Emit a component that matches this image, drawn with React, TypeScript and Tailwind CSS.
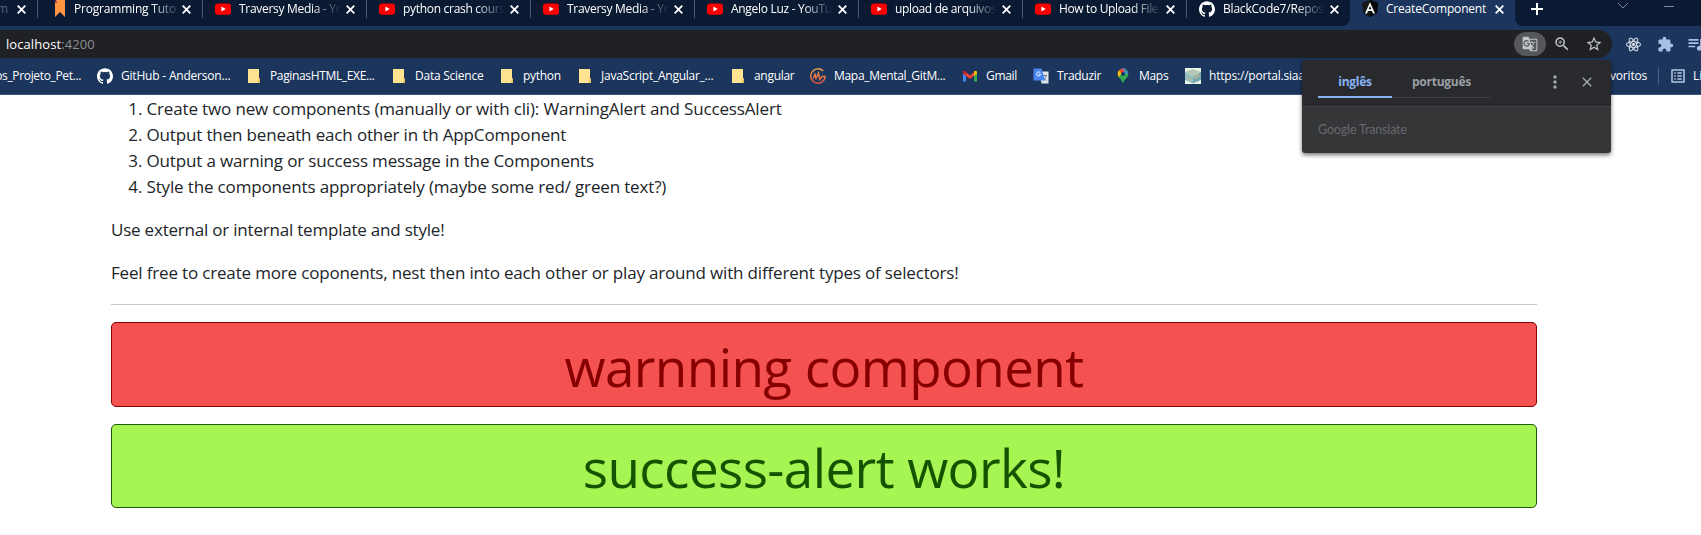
import React from "react";
import { SiGithub, SiReact } from "react-icons/si";
import { MdExtension, MdGTranslate, MdOutlineZoomIn, MdStarBorder, MdClose, MdMoreVert, MdQueueMusic, MdOutlineListAlt } from "react-icons/md";

function YouTubeIcon() {
  return (
    <svg width="16" height="16" viewBox="0 0 16 16">
      <rect x="0" y="2.4" width="16" height="11.4" rx="3" fill="#f00" />
      <path d="M6.4 5.6v5l4.3-2.5z" fill="#fff" />
    </svg>
  );
}
function RibbonIcon() {
  return (
    <svg width="16" height="18" viewBox="0 0 16 18">
      <path d="M1 0h10v17l-5-5-5 5z" fill="#ff9542" />
      <path d="M0 0h2l1 3-2 -1z" fill="#5b2a55" />
    </svg>
  );
}
function AngularIcon() {
  return (
    <svg width="16" height="18" viewBox="0 0 16 18">
      <path d="M8 0l8 2.8-1.2 10.4L8 17 1.2 13.2 0 2.8z" fill="#16181c" />
      <path d="M8 0l8 2.8-1.2 10.4L8 17z" fill="#050608" />
      <path d="M8 2.2L3 13.4h2l1-2.5h4l1 2.5h2zM8 6l1.4 3.3H6.6z" fill="#fff" />
    </svg>
  );
}
function FolderIcon() {
  return (
    <svg width="16" height="16" viewBox="0 0 16 16">
      <path d="M2 1h11v9.5h1V15H2z" fill="#ffe391" />
      <path d="M13 10.5h1V15h-2.5z" fill="#e9c25c" />
    </svg>
  );
}
function GitMindIcon() {
  return (
    <svg width="16" height="16" viewBox="0 0 16 16" fill="none" strokeWidth="1.4">
      <defs>
        <linearGradient id="gm" x1="0" y1="0" x2="0" y2="1">
          <stop offset="0" stopColor="#f0a04b" />
          <stop offset="1" stopColor="#e8553f" />
        </linearGradient>
      </defs>
      <path d="M13.2 3A7.2 7.2 0 1 0 15.2 8.5H12L9.8 11.5 8.5 5 6 10.5 5 6.5 3.2 10.5" stroke="url(#gm)" />
    </svg>
  );
}
function GmailIcon() {
  return (
    <svg width="16" height="16" viewBox="0 0 16 16">
      <path d="M1 4.5V13.5h3V6.5z" fill="#4285f4" />
      <path d="M12 6.5V13.5h3V4.5z" fill="#34a853" />
      <path d="M4 4.2l4 3 4-3v3.7l-4 3-4-3z" fill="#ea4335" />
      <path d="M1 4.2C1 2.5 2.8 2.2 4 3.2v4.6L1 5.7z" fill="#c5221f" />
      <path d="M15 4.2c0-1.7-1.8-2-3-1v4.6l3-2.1z" fill="#fbbc04" />
    </svg>
  );
}
function TranslateIcon() {
  return (
    <svg width="16" height="16" viewBox="0 0 16 16">
      <path d="M6 3.5h9.5v12H8.5z" fill="#dfe3ea" />
      <path d="M9 7.5h5M11.5 6.5v1M13 7.5c-.5 2.5-1.5 3.5-3 4.5M10 8.5c1 2 2 3 3.5 3.8" stroke="#6f8296" fill="none" />
      <path d="M0.5 0.5h8l3.5 12H.5z" fill="#4a86f0" />
      <path d="M7.3 4.8a2 2 0 1 0 .3 1.5H5.7" stroke="#fff" fill="none" />
    </svg>
  );
}
function MapsIcon() {
  return (
    <svg width="16" height="16" viewBox="0 0 16 16">
      <path d="M8 0.5A5.3 5.3 0 0 0 2.7 6c0 3.7 4 5 5.3 9.5C9.3 11 13.3 9.7 13.3 6A5.3 5.3 0 0 0 8 .5z" fill="#34a853" />
      <path d="M3.6 9L8 4 4 2.5C2.3 4.5 2.5 7.3 3.6 9z" fill="#fbbc04" />
      <path d="M4 2.5L7 6l4-5C8.5 0 5.5.5 4 2.5z" fill="#ea4335" />
      <path d="M6.5.7L13 4.2C12 1.5 9 0 6.5.7zM8 6l2.7-4.8L13.2 5z" fill="#4285f4" />
      <circle cx="8" cy="5.9" r="1.9" fill="#1a3560" />
    </svg>
  );
}
function PortalIcon() {
  return (
    <svg width="16" height="16" viewBox="0 0 16 16">
      <path d="M0 0h16v16H0z" fill="#eef3ee" />
      <path d="M8 1l8 3-8 4.5-8-4.5z" fill="#b5c9b4" />
      <path d="M0 4l8 4.5V15.5l-8-3.5z" fill="#8fbfc0" />
      <path d="M16 4L8 8.5V15.5l8-3.5z" fill="#78abb0" />
      <path d="M1.5 8l5 3v2l-5-3zM9.5 9l5-3v2l-5 3z" fill="#c3b596" />
    </svg>
  );
}
const GitHubIcon = () => <SiGithub size={16} color="#fff" />;

const tabs = [
  { Icon: RibbonIcon, title: "Programming Tuto", pad: "pl-[16px] gap-[4px]", track: "tracking-[-0.2px]", w: "w-[165px]" },
  { Icon: YouTubeIcon, title: "Traversy Media - Yo", pad: "pl-[12px] gap-2", track: "tracking-[-0.3px]", w: "w-[164px]" },
  { Icon: YouTubeIcon, title: "python crash cours", pad: "pl-[12px] gap-2", track: "tracking-[-0.3px]", w: "w-[164px]" },
  { Icon: YouTubeIcon, title: "Traversy Media - Yo", pad: "pl-[12px] gap-2", track: "tracking-[-0.3px]", w: "w-[164px]" },
  { Icon: YouTubeIcon, title: "Angelo Luz - YouTu", pad: "pl-[12px] gap-2", track: "tracking-[-0.3px]", w: "w-[164px]" },
  { Icon: YouTubeIcon, title: "upload de arquivos", pad: "pl-[12px] gap-2", track: "tracking-[-0.35px]", w: "w-[164px]" },
  { Icon: YouTubeIcon, title: "How to Upload File", pad: "pl-[12px] gap-2", track: "tracking-[-0.35px]", w: "w-[164px]" },
  { Icon: GitHubIcon, title: "BlackCode7/Repos", pad: "pl-[12px] gap-2", track: "tracking-[-0.2px]", w: "w-[163px]" },
];

const bookmarks = [
  { Icon: GitHubIcon, label: "GitHub - Anderson...", w: "w-[149px]", track: "tracking-[-0.2px]" },
  { Icon: FolderIcon, label: "PaginasHTML_EXE...", w: "w-[145px]", track: "tracking-[-0.35px]" },
  { Icon: FolderIcon, label: "Data Science", w: "w-[108px]", track: "tracking-[-0.25px]" },
  { Icon: FolderIcon, label: "python", w: "w-[78px]", track: "tracking-[-0.3px]" },
  { Icon: FolderIcon, label: "JavaScript_Angular_...", w: "w-[153px]", track: "tracking-[-0.25px]" },
  { Icon: FolderIcon, label: "angular", w: "w-[80px]", track: "tracking-[-0.3px]" },
  { Icon: GitMindIcon, label: "Mapa_Mental_GitM...", w: "w-[152px]", track: "tracking-[-0.3px]" },
  { Icon: GmailIcon, label: "Gmail", w: "w-[71px]", track: "tracking-[-0.3px]" },
  { Icon: TranslateIcon, label: "Traduzir", w: "w-[82px]", track: "tracking-[-0.3px]" },
  { Icon: MapsIcon, label: "Maps", w: "w-[70px]", track: "tracking-[-0.3px]" },
  { Icon: PortalIcon, label: "https://portal.siaa", w: "w-[134px]", track: "tracking-[-0.2px]" },
];

function TabClose({ className = "" }: { className?: string }) {
  return (
    <svg width="15" height="15" viewBox="0 0 15 15" stroke="#fff" strokeWidth="1.8" className={`shrink-0 ${className}`}>
      <path d="M3.7 3.7l7.6 7.6M11.3 3.7l-7.6 7.6" />
    </svg>
  );
}

function TabStrip() {
  return (
    <div className="flex h-[26px] shrink-0 bg-[#1b355c] text-[12px] text-white">
      <div className="flex w-[1350px] shrink-0 rounded-br-lg bg-[#0a1a33]">
        <div className="flex h-[18px] w-[38px] shrink-0 items-center justify-between border-r border-[#4c5a70] pr-[8px]">
          <span className="-ml-[3px] text-[#56617a]">m</span>
          <TabClose />
        </div>
        {tabs.map(({ Icon, title, pad, track, w }, i) => (
          <div key={i} className={`flex h-[18px] shrink-0 items-center pr-[8px] ${pad} ${w} ${i < 7 ? "border-r border-[#4c5a70]" : ""}`}>
            <span className="shrink-0"><Icon /></span>
            <span className="min-w-0 flex-1 whitespace-nowrap [mask-image:linear-gradient(to_right,#000_calc(100%-30px),transparent)]">
              <span className={track}>{title}</span>
            </span>
            <TabClose className="-ml-[6px]" />
          </div>
        ))}
      </div>
      <div className="flex h-[18px] w-[165px] shrink-0 items-center pl-[12px]">
        <AngularIcon />
        <span className="ml-2 flex-1 whitespace-nowrap tracking-[-0.2px]">CreateComponent</span>
        <TabClose className="mr-[8px]" />
      </div>
      <div className="flex flex-1 rounded-bl-lg bg-[#0a1a33]">
        <svg className="ml-[13px]" width="18" height="18" viewBox="0 0 18 18" stroke="#fff" strokeWidth="2">
          <path d="M9 3v12M3 9h12" />
        </svg>
        <svg className="ml-[71px] mt-[2px]" width="60" height="10" viewBox="0 0 60 10" fill="none" stroke="#7c889b">
          <path d="M1 1l5 5 5-5M47 4.5h10" />
        </svg>
      </div>
    </div>
  );
}

function AddressBar() {
  return (
    <div className="flex h-[36px] shrink-0 items-center bg-[#1b355c] py-[4px]">
      <div className="flex h-[28px] w-[1612px] shrink-0 items-center rounded-r-full bg-[#202124] pl-[6px]">
        <span className="flex-1 pt-px text-[13px] tracking-[0.08px] text-white">localhost<span className="text-[#8b8f95]">:4200</span></span>
        <span className="flex h-[24px] w-[32px] items-center justify-center rounded-full bg-[#55575b]"><MdGTranslate size={16} color="#c4c7ca" /></span>
        <MdOutlineZoomIn size={18} color="#c4c7ca" className="ml-[7px]" />
        <MdStarBorder size={18} color="#c4c7ca" className="ml-[14px] mr-[9px]" />
      </div>
      <SiReact size={15} color="#e6ecf5" stroke="#e6ecf5" strokeWidth={0.5} className="ml-[14px] shrink-0" />
      <MdExtension size={17} color="#a9c0e6" className="ml-[16px] shrink-0" />
      <MdQueueMusic size={20} color="#a9c0e6" className="ml-[12px] shrink-0" />
    </div>
  );
}

function BookmarksBar() {
  return (
    <div className="flex h-[33px] shrink-0 items-center border-b border-[#3f5575] bg-[#1b355c] pb-[4px] text-[12px] text-white">
      <div className="flex w-[97px] shrink-0 justify-end whitespace-nowrap pr-[16px] tracking-[-0.35px]">os_Projeto_Pet...</div>
      {bookmarks.map(({ Icon, label, w, track }, i) => (
        <div key={i} className={`flex shrink-0 items-center gap-2 whitespace-nowrap ${w}`}>
          <span className="shrink-0"><Icon /></span>
          <span className={track}>{label}</span>
        </div>
      ))}
      <div className="flex w-[328px] shrink-0 justify-end whitespace-nowrap tracking-[-0.2px]">voritos</div>
      <div className="ml-[11px] h-[16px] w-px shrink-0 bg-[#46608a]" />
      <MdOutlineListAlt size={18} color="#b5c6e2" className="ml-[10px] shrink-0" />
      <span className="ml-[6px] whitespace-nowrap">Li</span>
    </div>
  );
}

function TranslatePopup() {
  return (
    <div className="absolute left-[1302px] top-[60px] w-[309px] overflow-hidden rounded-[3px] bg-[#353638] shadow-[0_2px_4px_rgba(0,0,0,0.55)]">
      <div className="flex h-[47px] border-b border-[#404144] bg-[#292a2d] pl-[16px] text-[12px] font-bold">
        <div className="flex h-[38px] w-[74px] items-center justify-center border-b-2 border-[#8ab4f8] pt-[8px] tracking-[-0.25px] text-[#8ab4f8]">inglês</div>
        <div className="flex h-[38px] w-[99px] items-center justify-center border-b border-[#3f4043] pt-[7px] tracking-[-0.25px] text-[#9aa0a6]">português</div>
        <MdMoreVert size={20} color="#a5a9ae" className="ml-[54px] mt-[12px]" />
        <MdClose size={16} color="#a5a9ae" className="ml-[14px] mt-[14px]" />
      </div>
      <div className="flex h-[46px] items-center pl-[16px] pt-px text-[#67696d]">
        <span className="font-['Lato',sans-serif] text-[12.5px] tracking-[-0.15px]">Google Translate</span>
      </div>
    </div>
  );
}

export default function App() {
  return (
    <div className="relative flex h-[535px] w-[1701px] flex-col overflow-hidden bg-white font-['Open_Sans',sans-serif]">
      <TabStrip />
      <AddressBar />
      <BookmarksBar />
      <main className="ml-[111px] mt-px w-[1426px] text-[17px] leading-[26px] tracking-[-0.15px] text-[#212529]">
        <ol className="list-decimal pl-[35.5px]">
          <li>Create two new components (manually or with cli): WarningAlert and SuccessAlert</li>
          <li>Output then beneath each other in th AppComponent</li>
          <li>Output a warning or success message in the Components</li>
          <li>Style the components appropriately (maybe some red/ green text?)</li>
        </ol>
        <p className="mt-[17px] tracking-[-0.21px]">Use external or internal template and style!</p>
        <p className="mt-[17px] tracking-[-0.17px]">Feel free to create more coponents, nest then into each other or play around with different types of selectors!</p>
        <div className="mt-[18px] h-px bg-[#c8c9ca]" />
        <div className="mt-[17px] flex h-[85px] items-center justify-center rounded-[5px] border border-[#850000] bg-[#f45151] pt-[5px] text-[53px] tracking-[-0.6px] text-[#870000]">warnning component</div>
        <div className="mt-[17px] flex h-[84px] items-center justify-center rounded-[5px] border border-[#1d5a05] bg-[#a7f553] pt-[3px] text-[53px] tracking-[-0.6px] text-[#145400]">success-alert works!</div>
      </main>
      <TranslatePopup />
    </div>
  );
}
